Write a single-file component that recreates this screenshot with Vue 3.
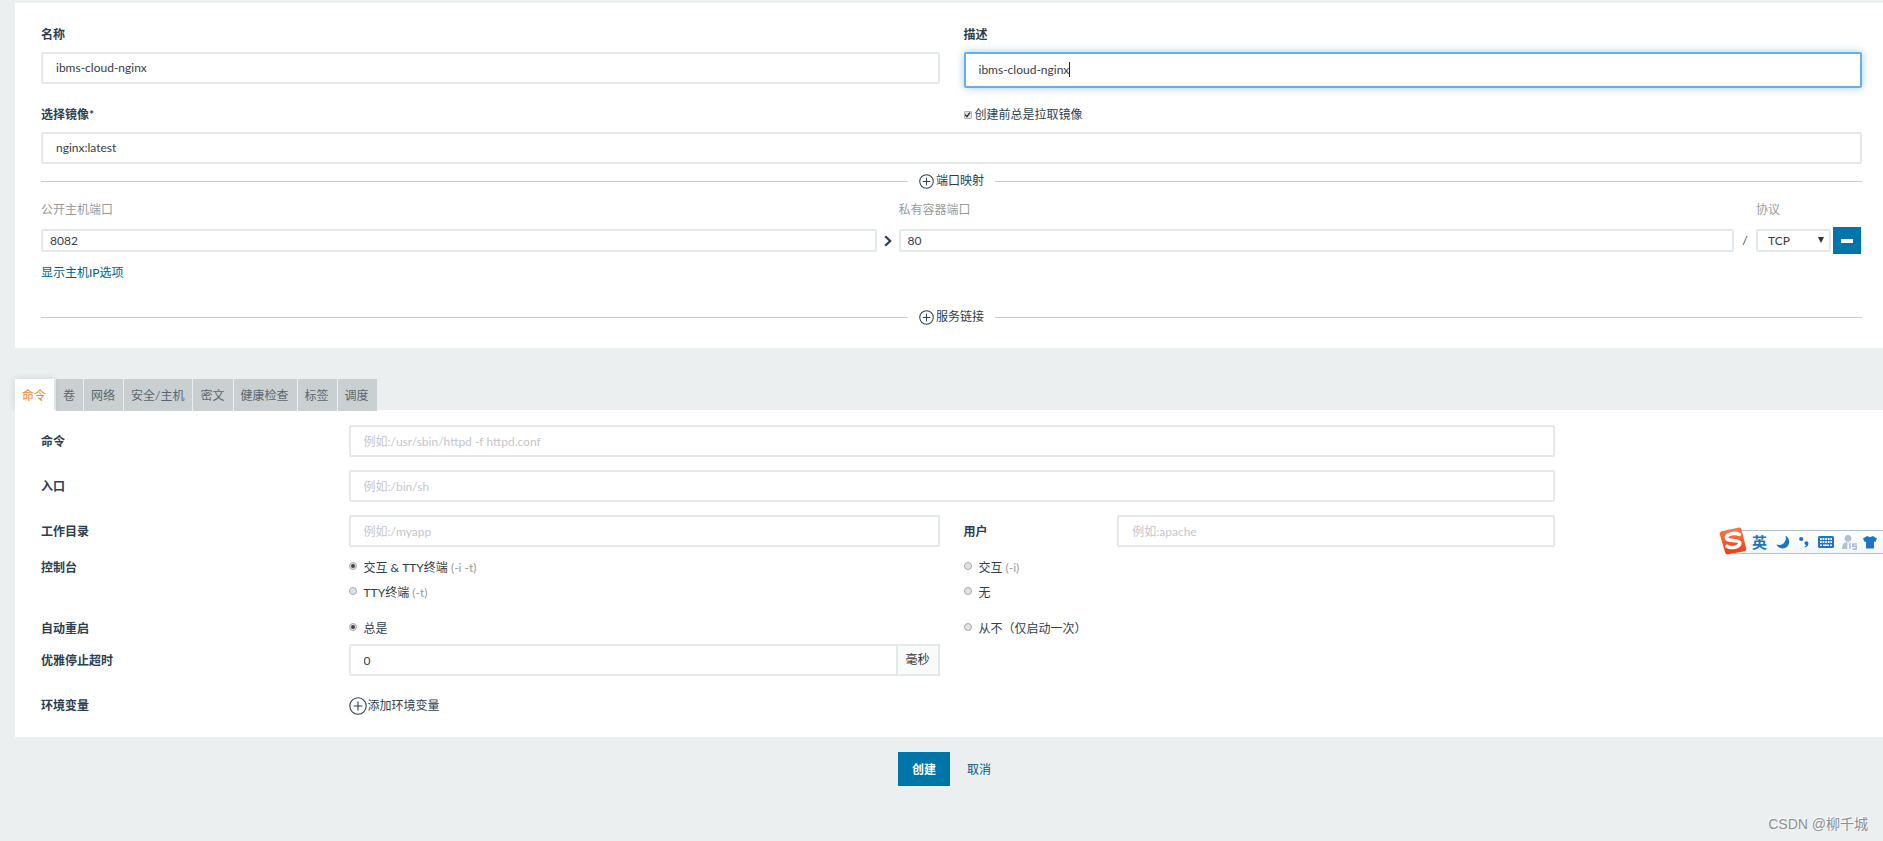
<script setup>
import { ref } from 'vue'

const name = ref('ibms-cloud-nginx')
const description = ref('ibms-cloud-nginx')
const image = ref('nginx:latest')
const pullImage = ref(true)
const publicPort = ref('8082')
const privatePort = ref('80')
const protocol = ref('TCP')
const tabs = ['命令', '卷', '网络', '安全/主机', '密文', '健康检查', '标签', '调度']
const activeTab = ref('命令')
const command = ref('')
const entryPoint = ref('')
const workDir = ref('')
const user = ref('')
const consoleMode = ref('both')
const restart = ref('always')
const stopTimeout = ref('0')
</script>

<template>
  <div class="page">
    <form class="form" @submit.prevent>
      <section class="panel panel-main">
        <div class="halves">
          <div>
            <label class="label" for="name">名称</label>
            <input id="name" v-model="name" class="input" type="text">
          </div>
          <div>
            <label class="label" for="description">描述</label>
            <div class="caret-field">
              <input id="description" v-model="description" class="input focused" type="text">
              <span class="caret"></span>
            </div>
          </div>
        </div>
        <div class="halves image-head">
          <label class="label" for="image">选择镜像*</label>
          <label class="check"><input v-model="pullImage" type="checkbox">创建前总是拉取镜像</label>
        </div>
        <input id="image" v-model="image" class="input" type="text">

        <div class="divider">
          <button class="add" type="button">
            <svg class="plus" viewBox="0 0 16 16"><circle cx="8" cy="8" r="7.2" /><path d="M8 4v8M4 8h8" /></svg>端口映射
          </button>
        </div>

        <div class="ports port-head">
          <label for="public-port">公开主机端口</label>
          <span></span>
          <label for="private-port">私有容器端口</label>
          <span></span>
          <label for="protocol">协议</label>
        </div>
        <div class="ports port-row">
          <input id="public-port" v-model="publicPort" class="input small" type="text">
          <svg class="arrow" viewBox="0 0 8 12"><path d="M1.2 1.2 6.2 6 1.2 10.8" /></svg>
          <input id="private-port" v-model="privatePort" class="input small" type="text">
          <span class="slash">/</span>
          <span class="select-wrap">
            <select id="protocol" v-model="protocol" class="input small select">
              <option>TCP</option>
              <option>UDP</option>
            </select>
            <svg class="down" viewBox="0 0 6 6"><path d="M0 0h6L3 6z" /></svg>
          </span>
          <button class="remove" type="button" aria-label="移除"><span></span></button>
        </div>
        <a class="link" href="#">显示主机IP选项</a>

        <div class="divider divider-last">
          <button class="add" type="button">
            <svg class="plus" viewBox="0 0 16 16"><circle cx="8" cy="8" r="7.2" /><path d="M8 4v8M4 8h8" /></svg>服务链接
          </button>
        </div>
      </section>

      <nav class="tabs">
        <button
          v-for="tab in tabs"
          :key="tab"
          type="button"
          :class="['tab', { active: tab === activeTab }]"
          @click="activeTab = tab"
        >{{ tab }}</button>
      </nav>

      <section class="panel panel-options">
        <div class="grid tall">
          <label class="label title" for="command">命令</label>
          <input id="command" v-model="command" class="input wide" type="text" placeholder="例如:/usr/sbin/httpd -f httpd.conf">
        </div>
        <div class="grid tall">
          <label class="label title" for="entry">入口</label>
          <input id="entry" v-model="entryPoint" class="input wide" type="text" placeholder="例如:/bin/sh">
        </div>
        <div class="grid tall">
          <label class="label title" for="workdir">工作目录</label>
          <input id="workdir" v-model="workDir" class="input mid" type="text" placeholder="例如:/myapp">
          <label class="label" for="user">用户</label>
          <input id="user" v-model="user" class="input user" type="text" placeholder="例如:apache">
        </div>
        <div class="grid console">
          <span class="label title">控制台</span>
          <label class="radio"><input v-model="consoleMode" type="radio" name="console" value="both"><span>交互 &amp; TTY终端 <i>(-i -t)</i></span></label>
          <label class="radio"><input v-model="consoleMode" type="radio" name="console" value="interactive"><span>交互 <i>(-i)</i></span></label>
          <label class="radio second"><input v-model="consoleMode" type="radio" name="console" value="tty"><span>TTY终端 <i>(-t)</i></span></label>
          <label class="radio"><input v-model="consoleMode" type="radio" name="console" value="none"><span>无</span></label>
        </div>
        <div class="grid restart">
          <span class="label title">自动重启</span>
          <label class="radio"><input v-model="restart" type="radio" name="restart" value="always"><span>总是</span></label>
          <label class="radio"><input v-model="restart" type="radio" name="restart" value="never"><span>从不（仅启动一次）</span></label>
        </div>
        <div class="grid timeout">
          <label class="label title" for="timeout">优雅停止超时</label>
          <div class="group mid">
            <input id="timeout" v-model="stopTimeout" class="input" type="text">
            <span class="addon">毫秒</span>
          </div>
        </div>
        <div class="grid">
          <span class="label title">环境变量</span>
          <button class="add env mid" type="button">
            <svg class="plus large" viewBox="0 0 18 18"><circle cx="9" cy="9" r="8.2" /><path d="M9 4.5v9M4.5 9h9" /></svg>添加环境变量
          </button>
        </div>
      </section>

      <div class="actions">
        <button class="create" type="submit">创建</button>
        <button class="cancel" type="button">取消</button>
      </div>
    </form>

    <aside class="ime">
      <svg class="ime-logo" viewBox="0 0 28 28">
        <defs>
          <linearGradient id="imeLogo" x1="0" y1="0" x2="0" y2="1">
            <stop offset="0" stop-color="#fb7a4a" />
            <stop offset="1" stop-color="#f03c10" />
          </linearGradient>
        </defs>
        <path d="M3.4 4 20 .6Q22 .2 22.500 2.200L27.200 21.500Q27.700 23.800 25.500 24.300L9 27.200Q6.700 27.500 6.100 25.400L.8 7.200Q.3 4.700 3.400 4z" fill="url(#imeLogo)" />
        <path d="M20.300 7.500C16 5.200 7.300 7 7.400 10.700 7.600 15 20.500 12 20.800 16.200 21 20.200 12 21.800 7.800 19.300" fill="none" stroke="#fff" stroke-width="3.600" stroke-linecap="round" />
      </svg>
      <span class="ime-lang">英</span>
      <svg class="ime-icon moon" viewBox="0 0 14 14"><path d="M9.500.8C12 2 13.400 4.400 13.200 7.200 12.900 11 10 13.400 6.500 13.400 3.700 13.400 1.500 12 .5 9.600 3.200 10.400 6 9.900 7.900 7.900 9.800 5.900 10.300 3.300 9.500.8z" /></svg>
      <svg class="ime-icon punct" viewBox="0 0 10 12"><circle cx="2.200" cy="3" r="2.100" /><path d="M6 5.800c1.400-1.200 3.500-.4 3.400 1.700C9.300 9.600 8 10.900 6 11.600l-.4-1c.8-.4 1.300-.9 1.500-1.600C5.300 8.900 5 6.800 6 5.800z" /></svg>
      <svg class="ime-icon keys" viewBox="0 0 16 12">
        <rect width="16" height="12" rx="1.500" />
        <path d="M2 3h12M2 6h12" stroke="#fff" stroke-width="1.800" stroke-dasharray="1.700 .9" />
        <path d="M2 9.300h2M5 9.300h6M12 9.300h2" stroke="#fff" stroke-width="1.600" />
      </svg>
      <svg class="ime-icon person" viewBox="0 0 16 15">
        <circle cx="6" cy="3.400" r="3.300" />
        <path d="M0 14q0-6 4-6.700h4q3 .4 3.500 3V14z" />
        <rect x="5.300" y="7.500" width="10.700" height="7.500" fill="#fbfcfd" />
        <path d="M6.800 9H8v5M14.800 9h-4v2.200h3.500V14h-4" fill="none" stroke="#abb9d1" stroke-width="1.400" />
      </svg>
      <svg class="ime-icon shirt" viewBox="0 0 14 13"><path d="M4.200 0q2.800 2 5.600 0L14 2.400 12.400 6 11 5.400V12.600H3V5.400L1.600 6 0 2.400z" /></svg>
    </aside>

    <footer class="mark">CSDN @柳千城</footer>
  </div>
</template>

<style>
html,
body {
  margin: 0;
  background: #ebeff0;
}
</style>

<style scoped>
.page {
  position: relative;
  box-sizing: border-box;
  min-height: 100vh;
  padding: 3px 0 0 15px;
  background: #ebeff0;
  color: #2c3e50;
  font: 12px/18px Lato, "Noto Sans CJK SC", sans-serif;
}
.page *,
.page *::before {
  box-sizing: border-box;
}
button,
input,
select {
  margin: 0;
  color: inherit;
  font: inherit;
}
button {
  padding: 0;
  border: 0;
  background: none;
  cursor: pointer;
}
.panel {
  background: #fff;
  padding: 23px 21px 22px 26px;
}
.halves {
  display: grid;
  grid-template-columns: 1fr 1fr;
  column-gap: 24px;
}
.label {
  display: block;
  font-weight: 700;
}
.halves .label {
  margin-bottom: 8px;
}
.input {
  display: block;
  width: 100%;
  height: 32px;
  padding: 0 13px;
  border: 2px solid #e3e8e8;
  border-radius: 2px;
  background: #fff;
  color: #3b3b47;
  outline: 0;
}
.panel-main .input {
  padding-bottom: 2px;
}
.input::placeholder {
  color: #c5c5cd;
  opacity: 1;
}
.input.focused {
  height: 36px;
  border-color: #66afe9;
  box-shadow: 0 0 8px rgba(102, 175, 233, 0.6);
}
.caret-field {
  position: relative;
}
.caret {
  position: absolute;
  top: 10px;
  left: 105px;
  width: 1px;
  height: 15px;
  background: #222;
}
.image-head {
  margin-top: 18px;
}
.check {
  display: flex;
  align-items: center;
  gap: 3px;
  height: 18px;
}
.check input {
  appearance: none;
  display: flex;
  width: 8px;
  height: 8px;
  border: 1px solid #b5b5b5;
  border-radius: 1px;
  background: #e4e4e4;
}
.check input:checked::before {
  content: "";
  width: 6px;
  height: 6px;
  background: #333;
  clip-path: polygon(0 50%, 18% 34%, 40% 58%, 84% 0, 100% 16%, 42% 96%);
}
.divider {
  display: flex;
  align-items: center;
  gap: 11px;
  margin-top: 8px;
}
.divider::before,
.divider::after {
  content: "";
  flex: 1;
  height: 1px;
  background: #ccc;
}
.divider-last {
  margin-top: 26px;
}
.add {
  display: flex;
  align-items: center;
  gap: 2px;
  height: 18px;
}
.plus {
  width: 15px;
  height: 15px;
  fill: none;
  stroke: #2c3e50;
  stroke-width: 1.1;
}
.plus.large {
  width: 18px;
  height: 18px;
}
.ports {
  display: grid;
  grid-template-columns: 1fr 22px 1fr 22px 75px 31px;
  align-items: center;
}
.port-head {
  margin: 11px 0 8px;
  color: #999;
}
.port-row {
  height: 27px;
}
.input.small {
  height: 23px;
  padding: 0 7px;
}
.arrow {
  width: 8px;
  height: 12px;
  justify-self: center;
  fill: none;
  stroke: #2c3e50;
  stroke-width: 2.2;
}
.slash {
  text-align: center;
}
.select-wrap {
  position: relative;
}
.input.select {
  appearance: none;
  padding: 0 10px;
}
.down {
  position: absolute;
  top: 8px;
  right: 7px;
  width: 6px;
  height: 6px;
  fill: #333;
  pointer-events: none;
}
.remove {
  display: flex;
  align-items: center;
  justify-content: center;
  width: 28px;
  height: 27px;
  margin-left: 2px;
  background: #0075a8;
}
.remove span {
  width: 12px;
  height: 4px;
  background: #fff;
}
.link {
  display: block;
  width: fit-content;
  margin-top: 10px;
  color: #00608f;
  text-decoration: none;
}
.tabs {
  position: relative;
  display: flex;
  gap: 1px;
  margin: 31px 0 -1px;
}
.tab {
  height: 32px;
  padding: 1px 8px 0 7px;
  background: #cacfd1;
  color: #5a666e;
}
.tab.active {
  background: #fff;
  color: #f0802f;
  box-shadow: 0 0 8px rgba(0, 0, 0, 0.12);
  clip-path: inset(-8px -8px 0 -8px);
}
.tab.active + .tab {
  margin-left: 1px;
}
.panel-options {
  padding-top: 15px;
  padding-bottom: 22px;
}
.grid {
  display: grid;
  grid-template-columns: repeat(12, 1fr);
  column-gap: 24px;
  align-items: center;
}
.tall {
  margin-bottom: 13px;
}
.tall .label,
.timeout .label {
  padding-top: 2px;
}
.title {
  grid-column: 1 / span 2;
}
.wide {
  grid-column: 3 / span 8;
}
.mid {
  grid-column: 3 / span 4;
}
.user {
  grid-column: 8 / span 3;
}
.console {
  margin-top: -1px;
  row-gap: 7px;
}
.radio {
  grid-column: span 4;
  display: flex;
  gap: 7px;
}
.radio.second {
  grid-column: 3 / span 4;
}
.radio i {
  color: #999;
  font-style: normal;
}
.radio input {
  appearance: none;
  display: flex;
  align-items: center;
  justify-content: center;
  width: 8px;
  height: 8px;
  margin-top: 3px;
  border: 1px solid #aaa;
  border-radius: 50%;
  background: #e2e2e2;
}
.radio input:checked::before {
  content: "";
  width: 4px;
  height: 4px;
  border-radius: 50%;
  background: #444;
}
.restart {
  margin: 18px 0 6px;
}
.timeout {
  margin-bottom: 21px;
}
.group {
  display: flex;
}
.group .input {
  flex: 1;
  border-radius: 2px 0 0 2px;
}
.addon {
  width: 42px;
  border: 2px solid #e3e8e8;
  border-left: 0;
  background: #f9fbfb;
  color: #333;
  line-height: 28px;
  text-align: center;
}
.env {
  justify-self: start;
  gap: 1px;
}
.actions {
  display: flex;
  justify-content: center;
  gap: 3px;
  padding: 15px 21px 0 26px;
}
.actions button {
  height: 34px;
  padding: 1px 14px 0;
}
.actions .create {
  background: #0075a8;
  color: #fff;
  font-weight: 700;
}
.actions .cancel {
  color: #00567f;
}
.ime {
  position: absolute;
  top: 530px;
  right: 0;
  display: flex;
  align-items: center;
  width: 149px;
  height: 24px;
  padding-left: 18px;
  border: solid #abc0d0;
  border-width: 1px 0;
  background: linear-gradient(#fff, #f3f7fa);
}
.ime-logo {
  position: absolute;
  top: -4px;
  left: -15px;
  width: 28px;
  height: 28px;
}
.ime-lang {
  width: 15px;
  color: #1f73c6;
  font-size: 15px;
  font-weight: 700;
}
.ime-icon {
  fill: #1f73c6;
}
.moon {
  width: 14px;
  height: 14px;
  margin-left: 9px;
}
.punct {
  width: 10px;
  height: 12px;
  margin-left: 9px;
}
.keys {
  width: 16px;
  height: 12px;
  margin-left: 9px;
}
.person {
  width: 16px;
  height: 15px;
  margin-left: 8px;
  fill: #b3bfd5;
}
.shirt {
  width: 14px;
  height: 13px;
  margin-left: 5px;
}
.mark {
  position: absolute;
  right: 15px;
  bottom: 7px;
  color: #8c8f90;
  font: 14px/20px "Liberation Sans", "Noto Sans CJK SC", sans-serif;
  text-shadow: -1px -1px 0 #fff;
}
</style>
